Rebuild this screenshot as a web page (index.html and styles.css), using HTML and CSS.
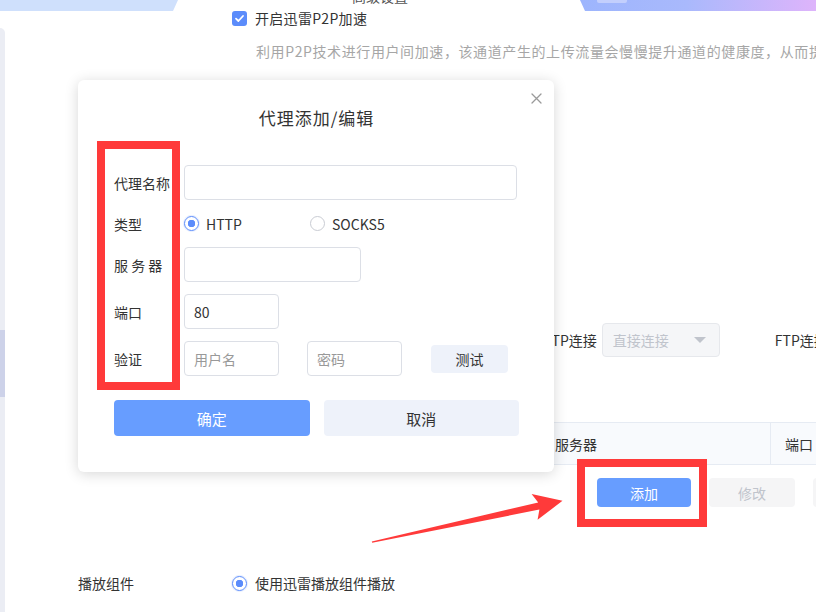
FILE: index.html
```html
<!DOCTYPE html>
<html lang="zh-CN">

<head>
    <meta charset="UTF-8">
    <meta name="viewport" content="width=device-width, initial-scale=1.0">
    <title>代理添加/编辑</title>
    <link rel="stylesheet" href="styles.css">
</head>

<body>
    <div class="page">
        <div class="topbar">
            <div class="tab tab-left"></div>
            <div class="tab-title">高级设置</div>
            <div class="tab tab-right"><span class="tab-chip"></span></div>
        </div>

        <div class="layout">
            <aside class="sidebar">
                <div class="sidebar-active"></div>
            </aside>

            <main class="content">
                <div class="setting check-row">
                    <div class="setting-label"></div>
                    <label class="check">
                        <span class="checkbox">
                            <svg width="11" height="11" viewBox="0 0 11 11">
                                <path d="M2 5.6 L4.4 8 L9 3" fill="none" stroke="#fff" stroke-width="1.8" stroke-linecap="round" stroke-linejoin="round"/>
                            </svg>
                        </span>
                        开启迅雷P2P加速
                    </label>
                </div>
                <p class="hint">利用P2P技术进行用户间加速，该通道产生的上传流量会慢慢提升通道的健康度，从而提升下载速度</p>

                <div class="conn-row">
                    <div class="conn">
                        <span class="conn-label">HTTP连接</span>
                        <div class="select">直接连接<span class="caret"></span></div>
                    </div>
                    <div class="conn">
                        <span class="conn-label">FTP连接</span>
                        <div class="select">直接连接<span class="caret"></span></div>
                    </div>
                </div>

                <div class="table-head">
                    <div class="th">名称</div>
                    <div class="th">服务器</div>
                    <div class="th th-split">端口</div>
                </div>

                <div class="table-actions">
                    <button class="btn btn-primary btn-small">添加</button>
                    <button class="btn btn-disabled btn-small">修改</button>
                    <button class="btn btn-disabled btn-small">删除</button>
                </div>

                <div class="setting play-row">
                    <div class="setting-label">播放组件</div>
                    <label class="radio-option">
                        <span class="radio checked"></span>
                        使用迅雷播放组件播放
                    </label>
                </div>
            </main>
        </div>

        <div class="dialog">
            <span class="dialog-close">
                <svg width="11" height="11" viewBox="0 0 11 11">
                    <path d="M1 1 L10 10 M10 1 L1 10" stroke="#9a9a9a" stroke-width="1.3" stroke-linecap="round"/>
                </svg>
            </span>
            <h2 class="dialog-title">代理添加/编辑</h2>

            <div class="form">
                <div class="form-row">
                    <span class="form-label">代理名称</span>
                    <div class="input input-wide"></div>
                </div>
                <div class="form-row radio-row">
                    <span class="form-label">类型</span>
                    <label class="radio-option type-option"><span class="radio checked"></span>HTTP</label>
                    <label class="radio-option type-option"><span class="radio"></span>SOCKS5</label>
                </div>
                <div class="form-row">
                    <span class="form-label">服 务 器</span>
                    <div class="input input-mid"></div>
                </div>
                <div class="form-row">
                    <span class="form-label">端口</span>
                    <div class="input input-short">80</div>
                </div>
                <div class="form-row auth-row">
                    <span class="form-label">验证</span>
                    <div class="input input-short placeholder">用户名</div>
                    <div class="input input-short placeholder">密码</div>
                    <button class="btn btn-light btn-test">测试</button>
                </div>
            </div>

            <div class="dialog-footer">
                <button class="btn btn-primary btn-large">确定</button>
                <button class="btn btn-light btn-large">取消</button>
            </div>
        </div>

        <!-- red annotation marks -->
        <div class="mark mark-labels"></div>
        <div class="mark mark-add"></div>
        <svg class="arrow" width="816" height="612" viewBox="0 0 816 612">
            <polygon points="371.8,541.4 538.2,502.4 531.6,494 562.5,500.8 537.6,519.8 539.4,509.6 372.2,542.8" fill="#ff3a3a"/>
        </svg>
    </div>
</body>

</html>
```

FILE: styles.css
```css
* {
    margin: 0;
    padding: 0;
    box-sizing: border-box;
}

body {
    font-family: "Noto Sans CJK SC", "Noto Sans", sans-serif;
    font-size: 14px;
    color: #333;
    background: #fff;
}

.page {
    position: relative;
    width: 816px;
    height: 612px;
    overflow: hidden;
}

/* top tabs */
.topbar {
    display: flex;
    height: 11px;
    overflow: hidden;
}

.tab {
    height: 11px;
    flex-shrink: 0;
}

.tab-left {
    width: 178px;
    background: #cfe0fc;
    clip-path: polygon(0 0, 100% 0, calc(100% - 5px) 100%, 0 100%);
}

.tab-title {
    margin-left: 174px;
    margin-top: -11px;
    line-height: 14px;
    height: 14px;
    color: #555;
}

.tab-right {
    margin-left: auto;
    width: 236px;
    background: linear-gradient(90deg, #9db5fd 0%, #a9b9fc 45%, #deb4fb 100%);
    clip-path: polygon(0 0, 100% 0, 100% 100%, 5px 100%);
    padding-left: 17px;
}

.tab-chip {
    display: block;
    width: 30px;
    height: 3px;
    background: #c3cffd;
    border-radius: 0 0 2px 2px;
}

/* page body */
.layout {
    display: flex;
    height: 601px;
}

.sidebar {
    width: 5px;
    flex-shrink: 0;
    margin-top: 17px;
    background: #ebedf4;
    border-radius: 0 6px 0 0;
    padding-top: 302px;
}

.sidebar-active {
    height: 67px;
    background: #cdd2e9;
}

.content {
    flex: 1;
    min-width: 0;
    padding-left: 73px;
}

.setting {
    display: grid;
    grid-template-columns: 154px 1fr;
    align-items: center;
}

.check-row {
    height: 15px;
}

.check {
    display: flex;
    align-items: center;
    gap: 8px;
    line-height: 15px;
    letter-spacing: 0.3px;
}

.checkbox {
    width: 15px;
    height: 15px;
    border-radius: 3px;
    background: #5b8cfb;
    display: flex;
    align-items: center;
    justify-content: center;
}

.hint {
    margin-top: 15px;
    padding-left: 178px;
    line-height: 20px;
    color: #a6a6a6;
    white-space: nowrap;
    letter-spacing: 0.6px;
}

.conn-row {
    display: flex;
    align-items: center;
    gap: 55px;
    margin-top: 262px;
    padding-left: 455px;
}

.conn {
    display: flex;
    align-items: center;
    gap: 5px;
    flex-shrink: 0;
}

.conn-label {
    white-space: nowrap;
}

.select {
    width: 118px;
    height: 34px;
    padding: 0 10px;
    background: #f5f6f8;
    border: 1px solid #e6e8ec;
    border-radius: 4px;
    color: #c0c4cc;
    display: flex;
    align-items: center;
    justify-content: space-between;
}

.caret {
    width: 0;
    height: 0;
    border-left: 6px solid transparent;
    border-right: 6px solid transparent;
    border-top: 6px solid #c0c4cc;
    margin-right: 3px;
}

.table-head {
    display: grid;
    grid-template-columns: 463px 229px 1fr;
    height: 43px;
    margin-top: 65px;
    background: #f8fafd;
    border-top: 1px solid #e6ebf3;
    border-bottom: 1px solid #e6ebf3;
}

.th {
    display: flex;
    align-items: center;
    padding-left: 14px;
}

.th-split {
    border-left: 1px solid #e6ebf3;
}

.table-actions {
    display: flex;
    gap: 18px;
    margin-top: 13px;
    padding-left: 519px;
}

.btn {
    font-family: inherit;
    font-size: 14px;
    border: none;
    border-radius: 4px;
    cursor: pointer;
    flex-shrink: 0;
}

.btn-primary {
    background: #679dff;
    color: #fff;
}

.btn-light {
    background: #eef2fa;
    color: #333;
}

.btn-disabled {
    background: #f5f5f6;
    color: #c0c4cc;
}

.btn-small {
    width: 86px;
    height: 29px;
}

.btn-small.btn-primary {
    width: 94px;
}

.play-row {
    margin-top: 66px;
    line-height: 20px;
}

.radio-option {
    display: flex;
    align-items: center;
    gap: 8px;
}

.radio {
    width: 15px;
    height: 15px;
    border-radius: 50%;
    border: 1px solid #c9ccd3;
    background: #fff;
    flex-shrink: 0;
}

.radio.checked {
    border-color: #5b8cfb;
    background: radial-gradient(circle, #5b8cfb 0 3.5px, #fff 4px);
    box-shadow: 0 0 0 1px rgba(91, 140, 251, 0.15);
}

/* dialog */
.dialog {
    position: absolute;
    left: 78px;
    top: 80px;
    width: 476px;
    height: 392px;
    background: #fff;
    border-radius: 6px;
    box-shadow: 0 2px 14px rgba(0, 0, 0, 0.16);
    padding: 26px 35px 0 36px;
}

.dialog-close {
    position: absolute;
    top: 13px;
    right: 12px;
    width: 11px;
    height: 11px;
    display: flex;
}

.dialog-title {
    font-size: 17px;
    font-weight: normal;
    letter-spacing: 1px;
    line-height: 24px;
    text-align: center;
    color: #333;
}

.form {
    display: flex;
    flex-direction: column;
    gap: 12px;
    margin-top: 35px;
}

.form-row {
    display: flex;
    align-items: center;
}

.form-label {
    width: 70px;
    flex-shrink: 0;
    white-space: pre;
}

.radio-row {
    height: 23px;
}

.type-option {
    width: 126px;
    gap: 7px;
}

.input {
    height: 35px;
    border: 1px solid #dcdfe6;
    border-radius: 4px;
    padding-left: 9px;
    display: flex;
    align-items: center;
    color: #333;
}

.input.placeholder {
    color: #999;
}

.input-wide {
    width: 333px;
}

.input-mid {
    width: 177px;
}

.input-short {
    width: 95px;
}

.auth-row {
    gap: 28px;
}

.auth-row .form-label {
    margin-right: -28px;
}

.btn-test {
    width: 77px;
    height: 28px;
    margin-left: 1px;
}

.dialog-footer {
    display: flex;
    gap: 14px;
    margin-top: 24px;
    width: 405px;
}

.btn-large {
    flex: 1;
    height: 36px;
    font-size: 15px;
}

/* annotations */
.mark {
    position: absolute;
    border: 8px solid #ff3a3a;
}

.mark-labels {
    left: 97px;
    top: 141px;
    width: 83px;
    height: 249px;
}

.mark-add {
    left: 577px;
    top: 459px;
    width: 130px;
    height: 68px;
}

.arrow {
    position: absolute;
    left: 0;
    top: 0;
    pointer-events: none;
}
```
